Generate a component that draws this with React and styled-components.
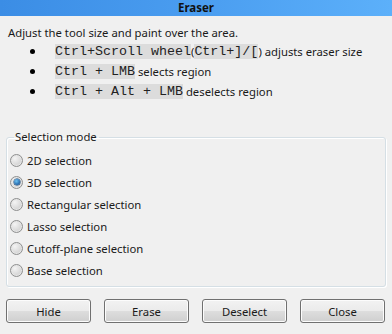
import React from "react";
import styled, { createGlobalStyle } from "styled-components";

const GlobalStyle = createGlobalStyle`
  html, body {
    margin: 0;
    padding: 0;
    background: #f0f0f0;
  }
  body {
    font-family: "Noto Sans", "Open Sans", sans-serif;
    font-size: 11.3px;
    color: #1a1a1a;
  }
`;

const modes = [
  "2D selection",
  "3D selection",
  "Rectangular selection",
  "Lasso selection",
  "Cutoff-plane selection",
  "Base selection",
];

const Eraser = ({ selected = 1 }) => {
  return (
    <Window>
      <TitleBar>Eraser</TitleBar>
      <Body>
        <Intro>Adjust the tool size and paint over the area.</Intro>
        <Hints>
          <Hint>
            <Code>Ctrl+Scroll wheel</Code>(<Code>Ctrl+]/[</Code>) adjusts eraser size
          </Hint>
          <Hint>
            <Code>Ctrl + LMB</Code> selects region
          </Hint>
          <Hint>
            <Code>Ctrl + Alt + LMB</Code> deselects region
          </Hint>
        </Hints>
        <Group>
          <Legend>Selection mode</Legend>
          {modes.map((m, i) => (
            <Option key={m}>
              <Radio checked={i === selected} />
              {m}
            </Option>
          ))}
        </Group>
        <Buttons>
          <Button>Hide</Button>
          <Button>Erase</Button>
          <Button>Deselect</Button>
          <Button>Close</Button>
        </Buttons>
      </Body>
    </Window>
  );
};

const App = () => (
  <>
    <GlobalStyle />
    <Eraser />
  </>
);

const Window = styled.div`
  width: 392px;
  height: 334px;
  display: flex;
  flex-direction: column;
`;

const TitleBar = styled.div`
  height: 16px;
  line-height: 16px;
  text-align: center;
  font-weight: bold;
  font-size: 11.5px;
  color: #111;
  background: linear-gradient(to right, #3b8de5, #4a9df0 50%, #5cb0fa);
`;

const Body = styled.div`
  padding: 0 6px;
  display: flex;
  flex-direction: column;
`;

const Intro = styled.p`
  margin: 9px 0 0 2px;
  line-height: 16px;
`;

const Hints = styled.ul`
  margin: 0;
  padding: 0 0 0 24px;
  list-style: none;
`;

const Hint = styled.li`
  height: 20px;
  display: flex;
  align-items: center;
  white-space: pre;

  &::before {
    content: "";
    width: 5px;
    height: 5px;
    border-radius: 50%;
    background: #000;
    margin-right: 20px;
  }
`;

const Code = styled.span`
  font-family: "Liberation Mono", "Courier New", monospace;
  font-size: 13.33px;
  line-height: 15px;
  background: #dcdcdc;
  color: #222;
`;

const Group = styled.fieldset`
  margin: 28px 0 0;
  padding: 4px 3px 5px;
  border: 1px solid #d5dfe5;
  border-radius: 3px;
  box-shadow: inset 1px 1px 0 #fff, 1px 1px 0 #fff;
`;

const Legend = styled.legend`
  margin-left: 4px;
  padding: 0 2px 0 1px;
  line-height: 16px;
`;

const Option = styled.label`
  height: 22px;
  display: flex;
  align-items: center;
  gap: 4px;
`;

const Radio = styled.span`
  position: relative;
  width: 11px;
  height: 11px;
  border-radius: 50%;
  border: 1px solid #8e8f8f;
  background: radial-gradient(circle at 35% 30%, #f4f4f4, #d4d4d4 70%);
  box-shadow: inset 0 0 0 1px #e6e6e6;

  &::after {
    content: "";
    display: ${({ checked }) => (checked ? "block" : "none")};
    position: absolute;
    left: 2.5px;
    top: 2.5px;
    width: 6px;
    height: 6px;
    border-radius: 50%;
    background: radial-gradient(circle at 40% 35%, #6fc3f3, #1b5ea3 75%);
    box-shadow: 0 0 0 0.5px #0d3e70;
  }
`;

const Buttons = styled.div`
  margin-top: 12px;
  display: grid;
  grid-template-columns: repeat(4, 85px);
  gap: 13px;
`;

const Button = styled.button`
  height: 24px;
  padding: 0;
  font-family: inherit;
  font-size: 11.3px;
  color: #1a1a1a;
  border: 1px solid #707070;
  border-radius: 3px;
  background: linear-gradient(to bottom, #f2f2f2 0%, #ebebeb 48%, #dddddd 52%, #cfcfcf 100%);
  box-shadow: inset 0 0 0 1px #fcfcfc;
`;

export default App;
